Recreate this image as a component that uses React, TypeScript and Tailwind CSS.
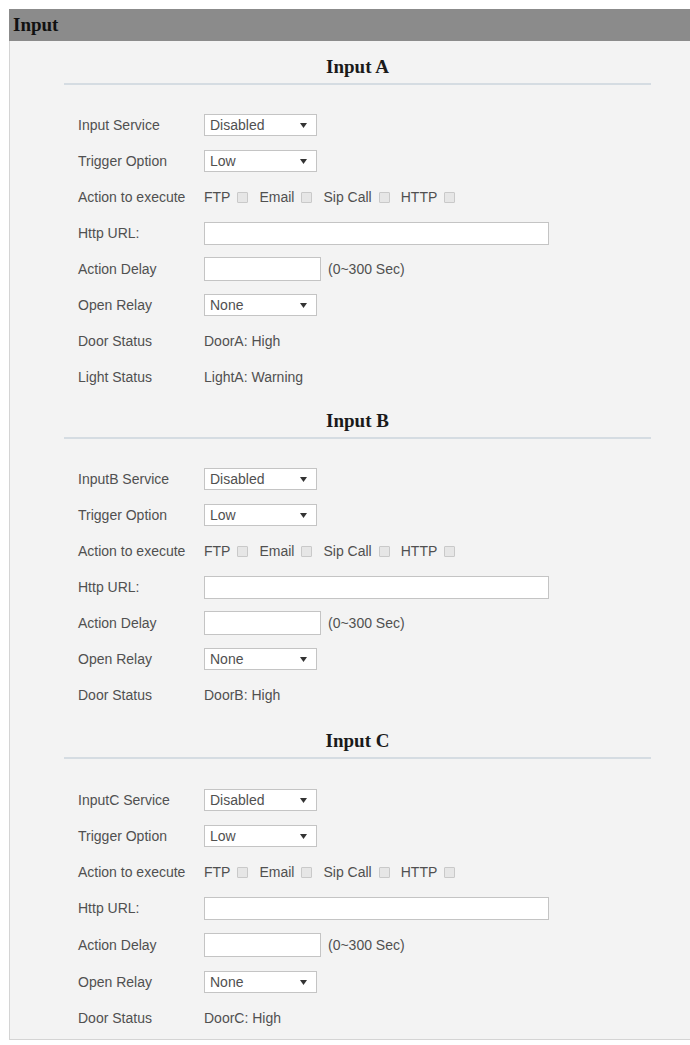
import React from "react";

type Row =
  | { kind: "select"; label: string; value: string }
  | { kind: "actions"; label: string }
  | { kind: "url"; label: string }
  | { kind: "delay"; label: string }
  | { kind: "text"; label: string; value: string };

interface Section {
  title: string;
  rows: Row[];
  extraTop: boolean;
}

const sections: Section[] = [
  {
    title: "Input A",
    extraTop: false,
    rows: [
      { kind: "select", label: "Input Service", value: "Disabled" },
      { kind: "select", label: "Trigger Option", value: "Low" },
      { kind: "actions", label: "Action to execute" },
      { kind: "url", label: "Http URL:" },
      { kind: "delay", label: "Action Delay" },
      { kind: "select", label: "Open Relay", value: "None" },
      { kind: "text", label: "Door Status", value: "DoorA: High" },
      { kind: "text", label: "Light Status", value: "LightA: Warning" },
    ],
  },
  {
    title: "Input B",
    extraTop: false,
    rows: [
      { kind: "select", label: "InputB Service", value: "Disabled" },
      { kind: "select", label: "Trigger Option", value: "Low" },
      { kind: "actions", label: "Action to execute" },
      { kind: "url", label: "Http URL:" },
      { kind: "delay", label: "Action Delay" },
      { kind: "select", label: "Open Relay", value: "None" },
      { kind: "text", label: "Door Status", value: "DoorB: High" },
    ],
  },
  {
    title: "Input C",
    extraTop: true,
    rows: [
      { kind: "select", label: "InputC Service", value: "Disabled" },
      { kind: "select", label: "Trigger Option", value: "Low" },
      { kind: "actions", label: "Action to execute" },
      { kind: "url", label: "Http URL:" },
      { kind: "delay", label: "Action Delay" },
      { kind: "select", label: "Open Relay", value: "None" },
      { kind: "text", label: "Door Status", value: "DoorC: High" },
    ],
  },
];

function FakeSelect({ value }: { value: string }) {
  return (
    <div className="flex items-center justify-between w-[113px] h-[22px] bg-white border border-[#c4c4c4] pl-[5px] pr-[9px]">
      <span>{value}</span>
      <svg width="7" height="5" viewBox="0 0 7 5">
        <path d="M0 0 L7 0 L3.5 5 Z" fill="#333" />
      </svg>
    </div>
  );
}

function Box() {
  return <span className="inline-block w-[11px] h-[11px] border border-[#c9c9c9] bg-[#e6e6e6] rounded-[1px] ml-[7px] mr-[11px]" />;
}

function Control({ row }: { row: Row }) {
  switch (row.kind) {
    case "select":
      return <FakeSelect value={row.value} />;
    case "actions":
      return (
        <div className="flex items-center">
          <span>FTP</span>
          <Box />
          <span>Email</span>
          <Box />
          <span>Sip Call</span>
          <Box />
          <span>HTTP</span>
          <Box />
        </div>
      );
    case "url":
      return <div className="w-[345px] h-[23px] bg-white border border-[#c4c4c4]" />;
    case "delay":
      return (
        <div className="flex items-center">
          <div className="w-[117px] h-[24px] bg-white border border-[#c4c4c4]" />
          <span className="ml-[7px]">(0~300 Sec)</span>
        </div>
      );
    default:
      return <span>{row.value}</span>;
  }
}

export default function App() {
  return (
    <div className="min-h-[1045px] bg-white pt-[9px] pl-[9px] font-['Liberation_Sans',Arial,sans-serif] text-[14px] text-[#505050]">
      <div className="h-[32px] bg-[#8b8b8b] flex items-center pl-[4px]">
        <span className="font-['Liberation_Serif',serif] font-bold text-[19px] text-[#111]">Input</span>
      </div>
      <div className="bg-[#f3f3f3] border-l border-b border-[#d4d4d4] pb-[3px]">
        {sections.map((s) => (
          <div key={s.title} className={`ml-[54px] w-[587px] ${s.extraTop ? "pt-[2px]" : ""}`}>
            <div className="pt-[16px] pb-[7px] h-[44px] border-b-2 border-[#d5dce2] text-center">
              <span className="font-['Liberation_Serif',serif] font-bold text-[19px] leading-[20px] text-[#1a1a1a]">{s.title}</span>
            </div>
            <div className={s.extraTop ? "mt-[23px]" : "mt-[22px]"}>
              {s.rows.map((r, i) => (
                <div key={i} className={`flex items-center pl-[14px] ${s.extraTop && r.kind === "delay" ? "h-[38px]" : "h-[36px]"}`}>
                  <div className="w-[126px] shrink-0">{r.label}</div>
                  <Control row={r} />
                </div>
              ))}
            </div>
          </div>
        ))}
      </div>
    </div>
  );
}
